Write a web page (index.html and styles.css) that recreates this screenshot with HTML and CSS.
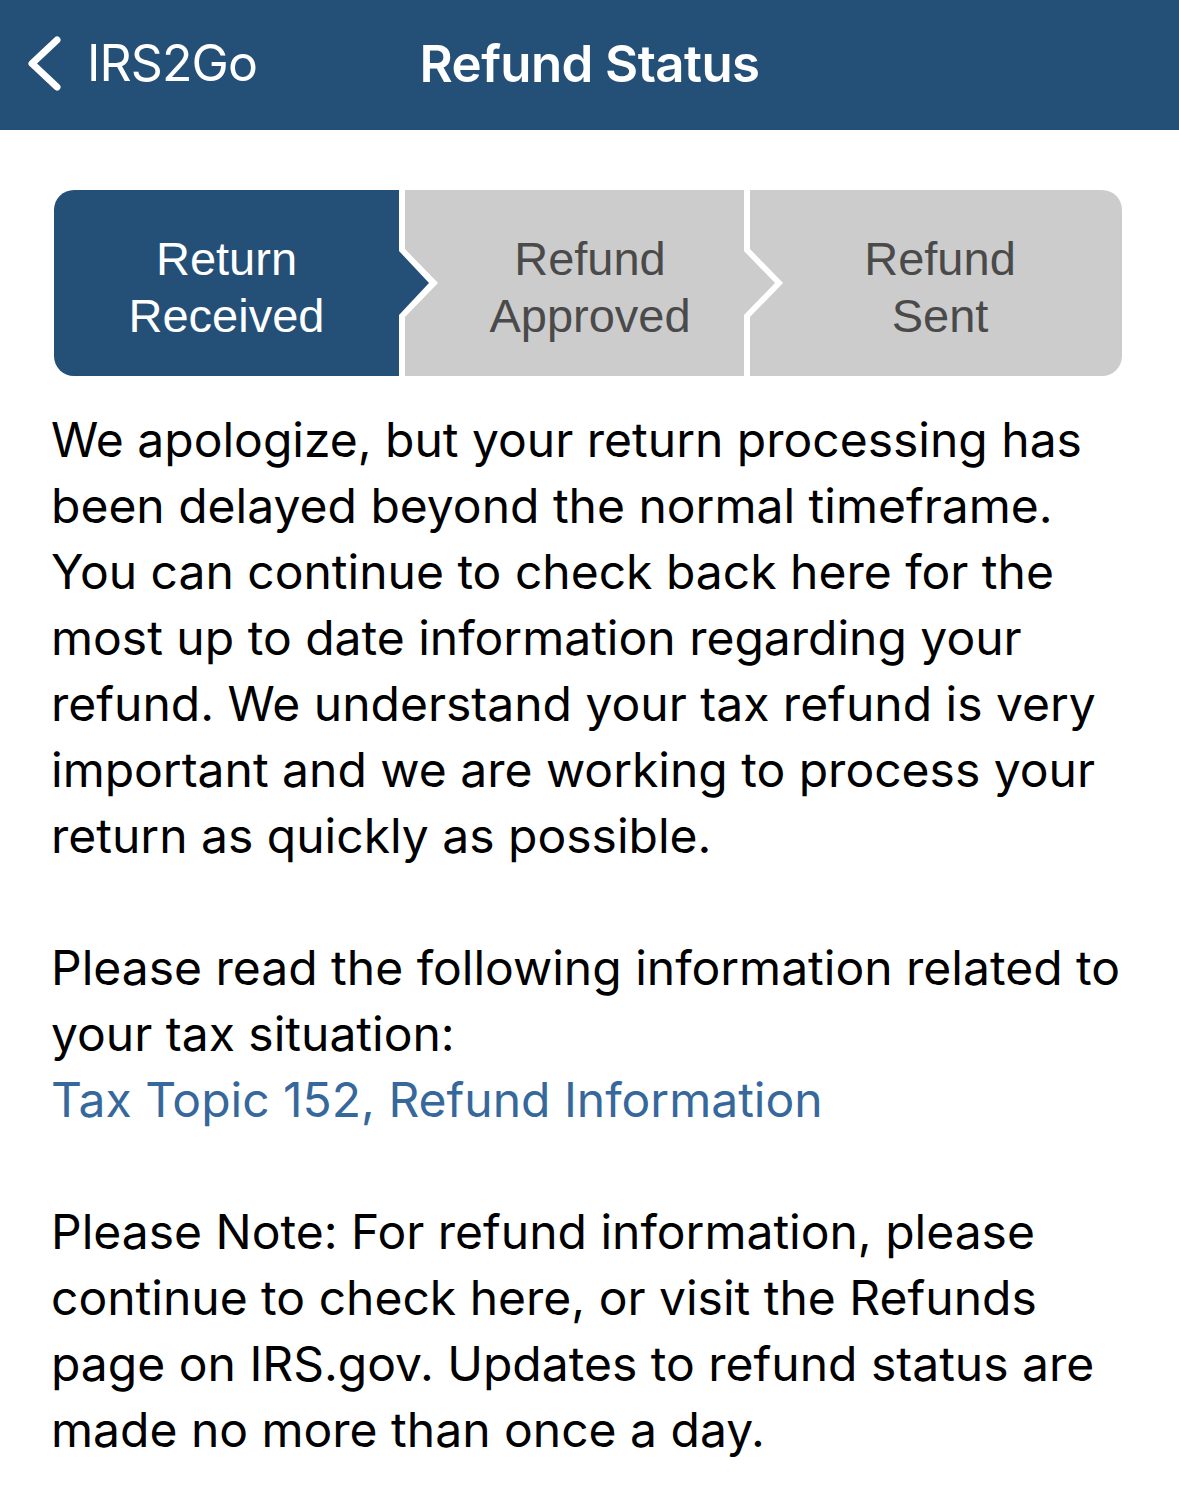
FILE: index.html
```html
<!DOCTYPE html>
<html lang="en">
<head>
<meta charset="utf-8">
<title>Refund Status</title>
<link rel="stylesheet" href="styles.css">
</head>
<body>
<header class="navbar">
  <div class="nav-left">
    <svg class="back-icon" width="40" height="70" viewBox="0 0 40 70" aria-hidden="true">
      <polyline points="33,11 8,34.5 33,58" fill="none" stroke="#ffffff" stroke-width="7" stroke-linecap="round" stroke-linejoin="round"/>
    </svg>
    <span class="back-label">IRS2Go</span>
  </div>
  <h1 class="nav-title">Refund Status</h1>
  <div class="nav-right"></div>
</header>

<main class="content">
  <div class="stepper">
    <div class="step step-1 active"><span>Return<br>Received</span></div>
    <div class="step step-2"><span>Refund<br>Approved</span></div>
    <div class="step step-3"><span>Refund<br>Sent</span></div>
  </div>

  <div class="message">
    <p>We apologize, but your return processing has been delayed beyond the normal timeframe. You can continue to check back here for the most up to date information regarding your refund. We understand your tax refund is very important and we are working to process your return as quickly as possible.</p>
    <p>Please read the following information related to your tax situation:<br><a class="link" href="#">Tax Topic 152, Refund Information</a></p>
    <p>Please Note: For refund information, please continue to check here, or visit the Refunds page on IRS.gov. Updates to refund status are made no more than once a day.</p>
  </div>
</main>
</body>
</html>
```

FILE: styles.css
```css
* { box-sizing: border-box; }

html, body {
  margin: 0;
  padding: 0;
  background: #ffffff;
}

body {
  width: 1179px;
  font-family: Inter, "Noto Sans", "Liberation Sans", sans-serif;
  color: #000000;
}

.navbar {
  height: 130px;
  padding-bottom: 4px;
  background: #244f77;
  display: grid;
  grid-template-columns: 1fr auto 1fr;
  align-items: center;
  color: #ffffff;
}

.nav-left {
  display: flex;
  align-items: center;
  padding-left: 24px;
}

.back-icon {
  display: block;
  margin-top: 2px;
}

.back-label {
  font-size: 50px;
  font-weight: 400;
  margin-left: 23px;
  letter-spacing: -0.9px;
}

.nav-title {
  margin: 0;
  font-size: 51px;
  font-weight: 600;
  letter-spacing: -0.6px;
}

.content {
  padding: 60px 53px 0 51px;
}

.stepper {
  display: flex;
  height: 186px;
  margin: 0 4px 0 3px;
  border-radius: 20px;
  overflow: hidden;
}

.step {
  height: 100%;
  display: flex;
  align-items: center;
  justify-content: center;
  background: #cccccc;
  color: #4a4a4a;
  font-family: "Liberation Sans", Arial, sans-serif;
  font-size: 47px;
  line-height: 57px;
  text-align: center;
  flex: none;
}

.step span { display: block; padding-top: 7px; }

.step.active {
  background: #244f77;
  color: #ffffff;
}

.step-1 {
  width: 375px;
  padding-right: 30px;
  clip-path: polygon(0 0, 345px 0, 345px 61px, 375px 93px, 345px 125px, 345px 100%, 0 100%);
}

.step-2 {
  width: 370px;
  margin-left: -24px;
  clip-path: polygon(0 0, 339px 0, 339px 61px, 370px 93px, 339px 125px, 339px 100%, 0 100%, 0 127px, 33px 93px, 0 59px);
}

.step-3 {
  width: 372px;
  margin-left: -25px;
  padding-left: 8px;
  clip-path: polygon(0 0, 100% 0, 100% 100%, 0 100%, 0 127px, 33px 93px, 0 59px);
}

.message {
  margin-top: 31px;
  font-size: 48px;
  line-height: 66px;
  letter-spacing: 0;
}

.message p {
  margin: 0 0 66px 0;
}

.link {
  color: #36689c;
  text-decoration: none;
}
```
